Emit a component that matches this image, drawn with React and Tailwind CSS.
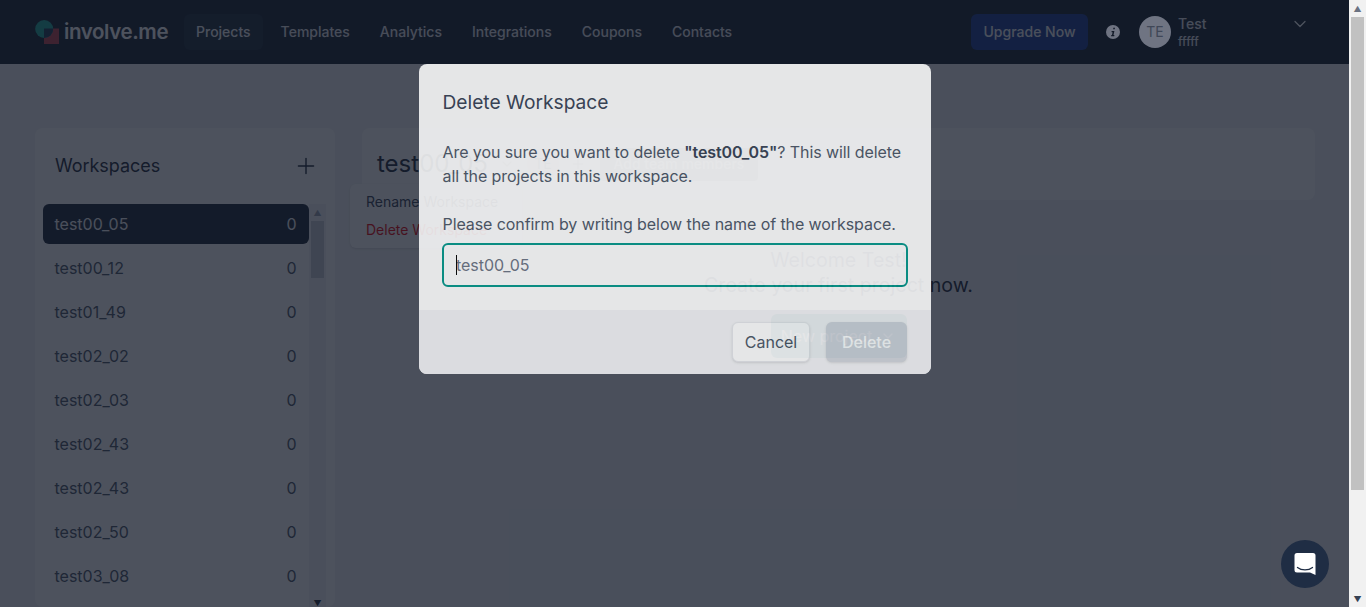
import React from 'react';
import { ChevronDown, Plus } from 'lucide-react';

const NAV = ['Projects', 'Templates', 'Analytics', 'Integrations', 'Coupons', 'Contacts'];
const WORKSPACES = ['test00_05', 'test00_12', 'test01_49', 'test02_02', 'test02_03', 'test02_43', 'test02_43', 'test02_50', 'test03_08'];

const Logo = () => (
    <div className="flex items-center w-[137px]">
        <svg width="24" height="24" viewBox="0 0 24 24" className="shrink-0">
            <rect x="9" y="8.500" width="15" height="15.500" fill="#c0404c" />
            <circle cx="9.200" cy="9" r="9" fill="#1fa898" />
            <path d="M9 8.500h9.200a9 9 0 0 1-9.200 9.500z" fill="#1e3a55" />
        </svg>
        <span className="ml-[5px] mt-px text-[20.5px] font-semibold tracking-[-0.4px] text-white">involve.me</span>
    </div>
);

const InfoDot = () => (
    <svg width="14" height="14" viewBox="0 0 14 14" className="relative z-10 ml-[18px] shrink-0">
        <circle cx="7" cy="7" r="7" fill="#6f7482" />
        <path d="M7.400 2.700h1.600l-.3 1.600H7.100zM5.500 6h2.900l-.9 4h.9l-.2 1.200H5.100l.2-1.200h.7l.6-2.800h-.9z" fill="#131b29" />
    </svg>
);

const Header = () => (
    <header className="h-16 bg-[#15202f] flex items-center pl-[35px] pr-[39px]">
        <Logo />
        <nav className="ml-3 flex items-center gap-1.5">
            {NAV.map((item, index) => (
                <a key={item} className={`h-9 flex items-center px-3 rounded-md text-sm font-medium ${index === 0 ? 'bg-[#1d2c3b] text-gray-100' : 'text-gray-200'}`}>
                    {item}
                </a>
            ))}
        </nav>
        <button className="ml-auto h-9 w-[117px] rounded-md bg-[#1d4ed8]/60 text-sm font-medium text-gray-100">Upgrade Now</button>
        <InfoDot />
        <div className="relative z-10 ml-[19px] w-8 h-8 rounded-full bg-[#6f7482] flex items-center justify-center text-sm text-[#3f4757]">TE</div>
        <div className="ml-[7px] w-[112px] pt-[2px] leading-none">
            <div className="text-sm font-medium text-gray-200 leading-4">Test</div>
            <div className="text-xs font-medium text-gray-200 leading-4 mt-[2px]">fffff</div>
        </div>
        <ChevronDown className="text-white mb-4" size={20} strokeWidth={1.5} />
    </header>
);

const Sidebar = () => (
    <aside className="w-[300px] h-[479px] shrink-0 bg-white rounded-lg overflow-hidden pl-2 pr-[9px] pt-5">
        <div className="flex items-center justify-between pl-3 pr-[7px] h-9">
            <h2 className="text-lg tracking-[-0.05px] text-gray-800">Workspaces</h2>
            <Plus className="text-gray-800" size={26} strokeWidth={1.3} />
        </div>
        <div className="mt-5 flex">
            <ul className="w-[266px] flex flex-col gap-1">
                {WORKSPACES.map((name, index) => (
                    <li key={index} className={`h-10 shrink-0 flex items-center justify-between pl-[11.5px] pr-[12.5px] rounded-md text-base ${index === 0 ? 'bg-[#1a2434] text-gray-100' : 'text-gray-600'}`}>
                        <span>{name}</span>
                        <span>0</span>
                    </li>
                ))}
            </ul>
            <div className="w-[17px] h-[403px] shrink-0 bg-gray-100 flex flex-col items-center">
                <div className="h-[17px] flex items-center justify-center text-[8px] leading-none text-gray-400">▲</div>
                <div className="w-[13px] h-[57px] bg-gray-400/50" />
                <div className="flex-1" />
                <div className="h-[8px] text-[8px] leading-none text-gray-800">▼</div>
            </div>
        </div>
    </aside>
);

const MainPanel = () => (
    <section className="flex-1 min-w-0">
        <div className="h-[72px] bg-white rounded-lg flex items-center pl-[15px]">
            <span className="text-2xl text-gray-800">test00_05</span>
            <ChevronDown className="ml-[11px] text-gray-400" size={16} />
            <span className="ml-3 w-8 h-8 rounded-full bg-gray-200 flex items-center justify-center text-sm text-gray-500">TE</span>
            <Plus className="ml-[11px] text-gray-400" size={16} />
            <span className="ml-[14px] h-[33px] w-[158px] flex items-center justify-center bg-gray-400 rounded text-sm font-medium text-white">Add team members</span>
        </div>
        <div className="pt-[48px] flex flex-col items-center text-[19.6px] leading-[25px] text-gray-700">
            <p>Welcome Test!</p>
            <p className="text-gray-800">Create your first project now.</p>
            <button className="mt-4 w-[136px] h-11 rounded-md bg-teal-700 text-white text-base flex items-center justify-center gap-2">
                New project
                <ChevronDown size={16} />
            </button>
        </div>
    </section>
);

const ContextMenu = () => (
    <div className="absolute left-[350px] top-[184px] w-[172px] h-[64px] bg-white rounded-md shadow-sm flex flex-col justify-center gap-2 pl-4 text-sm">
        <span className="text-gray-700 leading-5">Rename Workspace</span>
        <span className="text-red-600 leading-5">Delete Workspace</span>
    </div>
);

const DeleteModal = () => (
    <div className="absolute left-[419px] top-16 w-[512px] rounded-lg bg-white opacity-[0.86] overflow-hidden text-gray-600">
        <div className="px-[23.5px] pt-6 pb-[23px]">
            <h3 className="text-[19.2px] leading-7 text-gray-700">Delete Workspace</h3>
            <p className="mt-6 text-base leading-6 tracking-[-0.08px]">
                Are you sure you want to delete <b className="font-semibold text-gray-700">"test00_05"</b>? This will delete all the projects in this workspace.
            </p>
            <p className="mt-6 text-base leading-6 tracking-[-0.08px]">Please confirm by writing below the name of the workspace.</p>
            <div className="relative mt-[7px] -mx-[0.5px]">
                <input
                    readOnly
                    placeholder="test00_05"
                    className="block w-full h-11 px-3 rounded-md border-2 border-teal-600 bg-transparent text-base tracking-[-0.05px] outline-none caret-transparent placeholder:text-gray-500"
                />
                <span className="absolute left-[14px] top-3 w-px h-5 bg-black" />
            </div>
        </div>
        <div className="h-16 bg-gray-100 flex items-center justify-end gap-4 px-6">
            <button className="h-10 w-[78px] rounded-md border border-gray-200 bg-white text-base text-gray-600 shadow-sm">Cancel</button>
            <button className="h-10 w-[81px] rounded-md bg-gray-300 text-base font-medium text-white shadow-sm">Delete</button>
        </div>
    </div>
);

const ChatButton = () => (
    <div className="absolute left-[1281px] top-[540px] w-12 h-12 rounded-full bg-[#1f2d44] flex items-center justify-center">
        <svg width="22" height="24" viewBox="0 0 22 24">
            <path d="M3 1h16a2.500 2.500 0 0 1 2.500 2.500V23l-5.500-2.500H3A2.500 2.500 0 0 1 .5 18V3.500A2.500 2.500 0 0 1 3 1z" fill="#fff" />
            <path d="M3.500 15.500c4 3.200 11 3.200 15 0" fill="none" stroke="#1f2d44" strokeWidth="1.300" strokeLinecap="round" />
        </svg>
    </div>
);

const PageScrollbar = () => (
    <div className="w-[17px] h-full shrink-0 bg-[#f1f1f1] flex flex-col items-center">
        <div className="h-[17px] flex items-center justify-center text-[8px] leading-none text-gray-500">▲</div>
        <div className="w-[13px] h-[473px] bg-[#c1c1c1]" />
        <div className="flex-1" />
        <div className="h-[17px] flex items-center justify-center text-[8px] leading-none text-gray-700">▼</div>
    </div>
);

export default function App() {
    return (
        <div className="h-[607px] flex overflow-hidden font-['Inter',sans-serif]">
            <div className="relative flex-1 min-w-0 bg-gray-100 overflow-hidden">
                <Header />
                <main className="flex gap-[27px] pt-16 pl-[35px] pr-[34px]">
                    <Sidebar />
                    <MainPanel />
                </main>
                <ContextMenu />
                <div className="absolute inset-0 bg-[#111827]/75" />
                <DeleteModal />
                <ChatButton />
            </div>
            <PageScrollbar />
        </div>
    );
}
